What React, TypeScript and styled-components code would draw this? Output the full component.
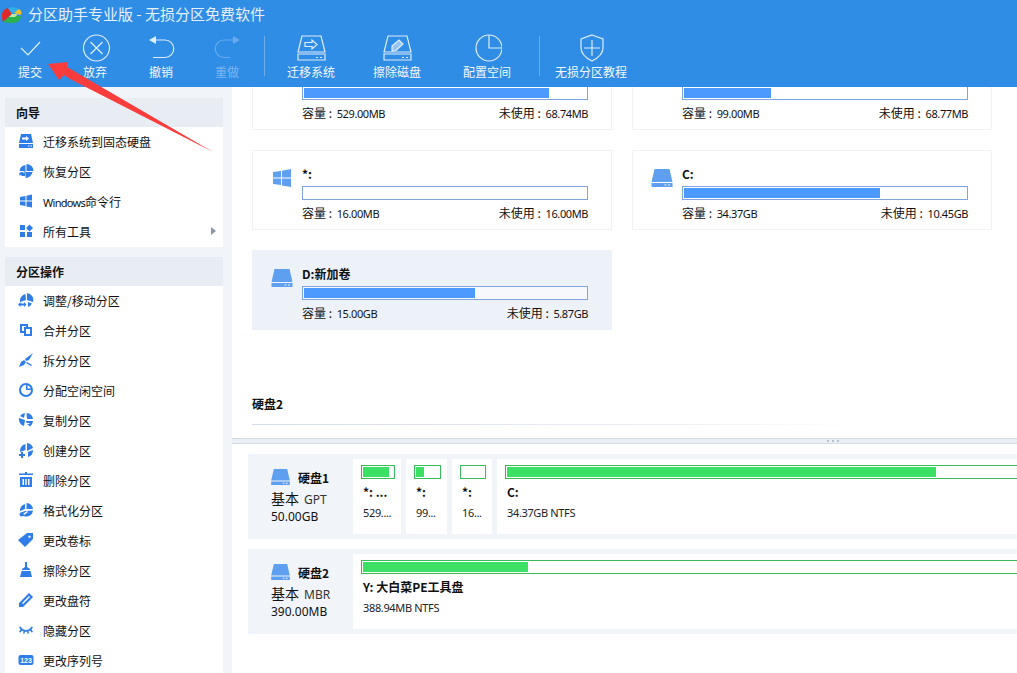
import styled, { createGlobalStyle } from "styled-components";

const Global = createGlobalStyle`
  html, body {
    margin: 0;
    padding: 0;
    height: 100%;
    overflow: hidden;
    background: #fff;
  }
  body {
    font-family: "Noto Sans CJK SC", "Noto Sans", sans-serif;
    font-size: 12px;
    color: #111;
  }
  * { box-sizing: border-box; }
`;

const Page = styled.div`
  position: relative;
  width: 1017px;
  height: 673px;
  overflow: hidden;
  display: flex;
  flex-direction: column;
`;
const Header = styled.header`
  height: 87px;
  flex: none;
  background: #2f8de6;
  color: #fff;
`;
const TitleBar = styled.div`
  height: 27px;
  display: flex;
  align-items: center;
  padding-left: 1px;
  gap: 6px;
  font-size: 15px;
  color: #e6f1fc;
  line-height: 23px;
`;
const Toolbar = styled.div`
  height: 60px;
  display: flex;
`;
const Tool = styled.div<{ $w: number; $off?: boolean }>`
  width: ${(p) => p.$w}px;
  flex: none;
  display: flex;
  flex-direction: column;
  align-items: center;
  font-size: 12px;
  line-height: 16px;
  color: ${(p) => (p.$off ? "#7db6ee" : "#f2f8fe")};
  svg {
    width: 30px;
    height: 30px;
    margin-top: 6px;
    margin-bottom: 1px;
    fill: none;
    stroke: currentColor;
    stroke-width: 1.2;
    opacity: ${(p) => (p.$off ? 0.75 : 0.9)};
  }
`;
const ToolSep = styled.div`
  width: 1px;
  height: 40px;
  margin: 9px 0 0 2px;
  flex: none;
  background: #6cacec;
`;
const Body = styled.div`
  flex: 1;
  min-height: 0;
  display: flex;
`;
const Sidebar = styled.aside`
  width: 232px;
  flex: none;
  background: #f1f5fa;
  padding: 11px 9px 0 5px;
  overflow: hidden;
`;
const SideTitle = styled.div`
  height: 29px;
  background: #e8edf3;
  padding-left: 11px;
  display: flex;
  align-items: center;
  font-size: 12px;
  font-weight: 700;
  color: #111;
`;
const SideList = styled.div`
  background: #fff;
  margin-bottom: 10px;
`;
const SideRow = styled.div`
  position: relative;
  height: 30px;
  display: flex;
  align-items: center;
  padding: 0 0 2px 13px;
  gap: 9px;
  color: #111;
  svg.icon {
    width: 16px;
    height: 16px;
    flex: none;
    fill: #2f7de8;
  }
`;
const Caret = styled.span`
  margin-left: auto;
  margin-right: 7px;
  width: 0;
  height: 0;
  border-left: 5px solid #8a97a8;
  border-top: 4px solid transparent;
  border-bottom: 4px solid transparent;
`;
const Latin = styled.span`
  font-family: "Noto Sans", sans-serif;
  font-size: 11px;
  letter-spacing: -0.4px;
  margin-left: 2px;
`;
const WinLabel = styled.span`
  font-family: "Noto Sans", sans-serif;
  font-size: 11px;
  letter-spacing: -0.7px;
`;
const Main = styled.main`
  flex: 1;
  min-width: 0;
  display: flex;
  flex-direction: column;
`;
const Volumes = styled.section`
  height: 351px;
  flex: none;
  overflow: hidden;
`;
const CardGrid = styled.div`
  margin-top: -37px;
  padding-left: 20px;
  display: grid;
  grid-template-columns: 360px 360px;
  grid-auto-rows: 80px;
  gap: 20px;
`;
const Card = styled.div<{ $active?: boolean }>`
  border: 1px solid ${(p) => (p.$active ? "#edf2f9" : "#f0f2f6")};
  background: ${(p) => (p.$active ? "#edf2f9" : "#fff")};
  display: grid;
  grid-template-columns: 49px 1fr;
  padding-right: 23px;
  svg {
    width: 22px;
    height: 18px;
    margin: 18px 0 0 18px;
    fill: #5f9ff0;
  }
`;
const CardBody = styled.div`
  padding-top: 14px;
`;
const CardName = styled.div`
  height: 18px;
  line-height: 18px;
  font-size: 12px;
  font-weight: 700;
  margin-bottom: 3px;
`;
const Bar = styled.div<{ $active?: boolean }>`
  height: 14px;
  border: 1px solid #7fa6dc;
  padding: 1px;
  background: ${(p) => (p.$active ? "#f6f8fc" : "#fff")};
`;
const Fill = styled.div`
  height: 100%;
  background: #4d9aff;
`;
const Info = styled.div`
  margin-top: 4px;
  height: 18px;
  line-height: 18px;
  display: flex;
  justify-content: space-between;
`;
const DiskHeading = styled.div`
  margin: 65px 0 0 20px;
  height: 30px;
  line-height: 18px;
  font-size: 12px;
  font-weight: 700;
  border-bottom: 1px solid transparent;
  border-image: linear-gradient(90deg, #d5deea 0, #e8edf4 50%, #fff 80%) 1;
`;
const Splitter = styled.div`
  height: 6px;
  flex: none;
  background: #ebf0f7;
  border-top: 1px solid #d3dbe5;
  border-bottom: 1px solid #d3dbe5;
  padding-right: 178px;
  display: flex;
  justify-content: flex-end;
  align-items: center;
  gap: 3px;
  i {
    width: 2px;
    height: 2px;
    background: #b5c1cf;
  }
`;
const DiskMap = styled.section`
  flex: 1;
  min-height: 0;
  padding: 10px 0 0 16px;
  overflow: hidden;
`;
const DiskRow = styled.div`
  height: 85px;
  margin-bottom: 10px;
  background: #f1f5fa;
  display: flex;
  padding: 5px 0;
`;
const DiskInfo = styled.div`
  width: 105px;
  flex: none;
  padding: 7px 0 0 23px;
  svg {
    width: 19px;
    height: 16px;
    fill: #5f9ff0;
  }
`;
const DiskName = styled.div`
  display: flex;
  align-items: center;
  gap: 8px;
  height: 22px;
  font-size: 12px;
  font-weight: 700;
`;
const DiskKind = styled.div`
  height: 20px;
  line-height: 20px;
  font-size: 14px;
  span {
    font-family: "Noto Sans", sans-serif;
    font-size: 12px;
    margin-left: 5px;
    color: #333;
  }
`;
const DiskSize = styled.div`
  height: 18px;
  line-height: 18px;
  font-family: "Noto Sans", sans-serif;
  font-size: 12px;
`;
const Parts = styled.div`
  display: flex;
  gap: 5px;
  flex: 1;
  min-width: 0;
`;
const Part = styled.div<{ $w: number }>`
  width: ${(p) => p.$w}px;
  flex: none;
  background: #fff;
  padding: 6px 6px 0 8px;
  overflow: hidden;
`;
const PartBar = styled.div`
  height: 14px;
  border: 1px solid #38b95a;
  padding: 1px;
  background: #fff;
`;
const PartFill = styled.div`
  height: 100%;
  background: #3be065;
`;
const PartName = styled.div`
  margin-top: 4px;
  padding-left: 2px;
  height: 18px;
  line-height: 18px;
  font-weight: 700;
  white-space: nowrap;
`;
const PartSize = styled.div`
  margin-top: 3px;
  padding-left: 2px;
  height: 18px;
  line-height: 18px;
  font-family: "Noto Sans", sans-serif;
  font-size: 11px;
  letter-spacing: -0.35px;
  color: #222;
  white-space: nowrap;
`;
const Pointer = styled.svg`
  position: absolute;
  left: 0;
  top: 0;
  width: 240px;
  height: 170px;
  pointer-events: none;
`;

const Logo = () => (
  <svg width="21" height="20" viewBox="0 0 21 20">
    <path d="M1 11c0-3 2-6 6-7l4 6-9 8c-1-2-1-5-1-7z" fill="#e02a2a" />
    <path d="M7 4c3-1 8-1 11 1l-5 4-2 1z" fill="#2fb0e8" />
    <path d="M13 9l5-4c2 1 3 4 2 6z" fill="#f3c026" />
    <path d="M9 12h11c0 4-4 7-8 7-4 0-7-.500-10-1z" fill="#29b34a" />
    <path d="M11 10h6l-3 3H8z" fill="#bfe8a0" />
  </svg>
);

const toolIcons: Record<string, React.ReactNode> = {
  check: <path d="M6 15l7 7 12-13" />,
  cancel: (
    <>
      <circle cx="16.500" cy="15" r="13" />
      <path d="M10.500 9l12 12M22.500 9l-12 12" />
    </>
  ),
  undo: (
    <>
      <path d="M10 7h9a8.750 8.750 0 0 1 0 17.500H7" />
      <path d="M3 7l7-4v8z" fill="currentColor" stroke="none" />
    </>
  ),
  redo: (
    <>
      <path d="M21 7h-9a8.750 8.750 0 0 0 0 17.500h6" />
      <path d="M28 7l-7-4v8z" fill="currentColor" stroke="none" />
    </>
  ),
  migrate: (
    <>
      <path d="M6 3h19l4 16H2z" />
      <path d="M2 21h27v6H2z" />
      <path d="M24 24.500h2M20 24.500h2" />
      <path d="M9 9.500h7V7l5 4.500-5 4.500v-2.500H9z" />
    </>
  ),
  wipe: (
    <>
      <path d="M6 3h19l4 16H2z" />
      <path d="M2 21h27v6H2z" />
      <path d="M24 24.500h2M20 24.500h2" />
      <path d="M10 13l7-6 4 4-7 6.500-4 .5z" fill="rgba(255,255,255,.55)" />
    </>
  ),
  pie: (
    <>
      <circle cx="17" cy="15" r="13" />
      <path d="M17 2v13h13" />
    </>
  ),
  shield: (
    <>
      <path d="M16 2l11 4v9c0 6-5 10-11 13-6-3-11-7-11-13V6z" />
      <path d="M16 7v16M8 15h16" />
    </>
  ),
};

const ToolIcon = ({ name }: { name: string }) => <svg viewBox="0 0 30 30">{toolIcons[name]}</svg>;

const DiskGlyph = () => (
  <svg viewBox="0 0 21 18">
    <path d="M3 0h15l3 13H0z" />
    <path fillRule="evenodd" d="M0 14h21v4H0zM13 15.500v1h2v-1zM16.500 15.500v1h2v-1z" />
  </svg>
);

const WinGlyph = () => (
  <svg viewBox="0 0 22 18">
    <path d="M2 3l8-1v6.500H2zM11 1.800L20 0v8.500h-9zM2 9.500h8V16l-8-1zM11 9.500h9V18l-9-1.500z" />
  </svg>
);

const sideIcons: Record<string, React.ReactNode> = {
  migrate: (
    <path
      fillRule="evenodd"
      d="M3 1h10l2 9H1zM1 11h14v4H1zM10 12.500v1h1.500v-1zM12.500 12.500v1H14v-1zM4 4.500v2h4V8l3-2.500L8 3v1.500z"
    />
  ),
  restore: (
    <>
      <path d="M8.500 1a7 7 0 0 1 7 7h-7zM7.500 2v7h7a7 7 0 0 1-7 6V11a3 3 0 0 0-3-3H1.500a7 7 0 0 1 6-6z" />
      <path d="M1 11a3 3 0 0 1 5-1l1-1v4H3l1-1a1.500 1.500 0 0 0-2 1z" />
    </>
  ),
  windows: <path d="M2 4l5.500-1v4.500H2zM8.500 2.800L14 1.500v6H8.500zM2 8.500h5.500V13L2 12zM8.500 8.500H14v6l-5.500-1z" />,
  tools: <path d="M2 2h5v5H2zM2 9h5v5H2zM9 9h5v5H9zM11.500 1.500L15 5l-3.500 3.500L8 5z" />,
  resize: (
    <>
      <path d="M9 1a7 7 0 0 1 6 9L9 8zM7.500 2L8 8l-6 2a7 7 0 0 1 5.500-8zM10 10l4 1.500A7 7 0 0 1 10 15z" />
      <path d="M0 12.500l2.500-2.500v1.500H6V10l2.500 2.500L6 15v-1.500H2.500V15z" />
    </>
  ),
  merge: <path fillRule="evenodd" d="M2 2h8v3h4v9H6v-3H2zM4 4v5h2V5h2V4zM8 7v3h0v2h4V7z" />,
  split: <path d="M15 1l-4 7-3 1-1-2zM1 15l2-5 3-2 2 2-2 3zM9 10l5 3-1 1-5-3z" />,
  allocate: (
    <path
      fillRule="evenodd"
      d="M8 1a7 7 0 1 0 7 7 7 7 0 0 0-7-7zm0 2v5h5a5 5 0 1 1-5-5zM9.500 3.200a5 5 0 0 1 3.300 3.300H9.500z"
    />
  ),
  copy: (
    <>
      <path d="M2 4a7 7 0 0 1 5-3l-1 5zM8.500 1a7 7 0 0 1 6.500 6H9zM1 6l6 2-1 6a7 7 0 0 1-5-8z" />
      <path d="M8 9h7a7 7 0 0 1-3 5.500L9 12h3l-1-1H8.500z" />
    </>
  ),
  create: (
    <>
      <path d="M9 1a7 7 0 0 1 6 5l-6 3zM7.500 2v6L2 10a7 7 0 0 1 5.500-8zM10 10l5-2a7 7 0 0 1-5 7z" />
      <path d="M3 10h2v2h2v2H5v2H3v-2H1v-2h2z" />
    </>
  ),
  trash: <path fillRule="evenodd" d="M7 0h2v1.500h6v1.500H1V1.500h6zM2 5h12v10H2zM4.500 7v6H6V7zM7.300 7v6h1.400V7zM10 7v6h1.500V7z" />,
  format: (
    <>
      <path d="M8.500 1a7 7 0 0 1 6.500 6H8.500zM7 2v5L2 9a7 7 0 0 1 5-7z" />
      <path fillRule="evenodd" d="M15 8.500A7 7 0 0 1 2 11l5-2zM6 13l4-3-1-1-4 3z" />
      <circle cx="3.500" cy="12.500" r="2" />
    </>
  ),
  tag: <path fillRule="evenodd" d="M9 1h6v6l-8 8-7-7zM11.500 3.500a1.200 1.200 0 1 0 .01 0z" />,
  broom: <path d="M7 0h2v5l3 2v1H4V7l3-2zM3.500 9h9L14 15H2z" />,
  pencil: <path fillRule="evenodd" d="M11 1l4 4L5 15H1v-4zM11 4l-7 7 1 1 7-7z" />,
  eye: <path d="M1 5l1.500-.5C4 7 6 8 8 8s4-1 5.500-3.500L15 5l-1.500 2.500L15 10l-1.500.5-1.500-2-1.500 1 .5 2-1.500.3L9 9.700H7l-.5 2.100-1.500-.3.500-2-1.500-1-1.500 2L1 10l1.500-2.500z" />,
};

const SideIcon = ({ name }: { name: string }) =>
  name === "serial" ? (
    <svg className="icon" viewBox="0 0 16 16">
      <rect x="0.500" y="3" width="15" height="10" rx="2" />
      <text x="8" y="11" fontSize="7" fontWeight="700" fontFamily="Liberation Sans" textAnchor="middle" fill="#fff">
        123
      </text>
    </svg>
  ) : (
    <svg className="icon" viewBox="0 0 16 16">
      {sideIcons[name]}
    </svg>
  );

const wizardRows = [
  { icon: "migrate", text: "迁移系统到固态硬盘" },
  { icon: "restore", text: "恢复分区" },
  { icon: "windows", text: "Windows", suffix: "命令行" },
  { icon: "tools", text: "所有工具", more: true },
];
const partitionRows = [
  { icon: "resize", text: "调整/移动分区" },
  { icon: "merge", text: "合并分区" },
  { icon: "split", text: "拆分分区" },
  { icon: "allocate", text: "分配空闲空间" },
  { icon: "copy", text: "复制分区" },
  { icon: "create", text: "创建分区" },
  { icon: "trash", text: "删除分区" },
  { icon: "format", text: "格式化分区" },
  { icon: "tag", text: "更改卷标" },
  { icon: "broom", text: "擦除分区" },
  { icon: "pencil", text: "更改盘符" },
  { icon: "eye", text: "隐藏分区" },
  { icon: "serial", text: "更改序列号" },
];

const cards = [
  { name: "", size: "529.00MB", free: "68.74MB", used: 87, kind: "none" },
  { name: "", size: "99.00MB", free: "68.77MB", used: 31, kind: "none" },
  { name: "*:", size: "16.00MB", free: "16.00MB", used: 0, kind: "win" },
  { name: "C:", size: "34.37GB", free: "10.45GB", used: 69.5, kind: "disk" },
  { name: "D:新加卷", size: "15.00GB", free: "5.87GB", used: 60.5, kind: "disk", active: true },
];

function App() {
  return (
    <Page>
      <Global />
      <Header>
        <TitleBar>
          <Logo />
          分区助手专业版 - 无损分区免费软件
        </TitleBar>
        <Toolbar>
          <Tool $w={60}>
            <ToolIcon name="check" />
            提交
          </Tool>
          <Tool $w={70}>
            <ToolIcon name="cancel" />
            放弃
          </Tool>
          <Tool $w={62}>
            <ToolIcon name="undo" />
            撤销
          </Tool>
          <Tool $w={70} $off>
            <ToolIcon name="redo" />
            重做
          </Tool>
          <ToolSep />
          <Tool $w={92}>
            <ToolIcon name="migrate" />
            迁移系统
          </Tool>
          <Tool $w={80}>
            <ToolIcon name="wipe" />
            擦除磁盘
          </Tool>
          <Tool $w={100}>
            <ToolIcon name="pie" />
            配置空间
          </Tool>
          <ToolSep />
          <Tool $w={102}>
            <ToolIcon name="shield" />
            无损分区教程
          </Tool>
        </Toolbar>
      </Header>
      <Body>
        <Sidebar>
          <SideTitle>向导</SideTitle>
          <SideList>
            {wizardRows.map((row) => (
              <SideRow key={row.icon}>
                <SideIcon name={row.icon} />
                <span>
                  {row.suffix ? <WinLabel>{row.text}</WinLabel> : row.text}
                  {row.suffix}
                </span>
                {row.more && <Caret />}
              </SideRow>
            ))}
          </SideList>
          <SideTitle>分区操作</SideTitle>
          <SideList>
            {partitionRows.map((row) => (
              <SideRow key={row.icon}>
                <SideIcon name={row.icon} />
                <span>{row.text}</span>
              </SideRow>
            ))}
          </SideList>
        </Sidebar>
        <Main>
          <Volumes>
            <CardGrid>
              {cards.map((c) => (
                <Card key={c.size + c.free} $active={c.active}>
                  <div>{c.kind === "win" ? <WinGlyph /> : c.kind === "disk" ? <DiskGlyph /> : null}</div>
                  <CardBody>
                    <CardName>{c.name}</CardName>
                    <Bar $active={c.active}>
                      <Fill style={{ width: `${c.used}%` }} />
                    </Bar>
                    <Info>
                      <span>
                        容量 : <Latin>{c.size}</Latin>
                      </span>
                      <span>
                        未使用 : <Latin>{c.free}</Latin>
                      </span>
                    </Info>
                  </CardBody>
                </Card>
              ))}
            </CardGrid>
            <DiskHeading>硬盘2</DiskHeading>
          </Volumes>
          <Splitter>
            <i />
            <i />
            <i />
          </Splitter>
          <DiskMap>
            <DiskRow>
              <DiskInfo>
                <DiskName>
                  <DiskGlyph />
                  硬盘1
                </DiskName>
                <DiskKind>
                  基本<span>GPT</span>
                </DiskKind>
                <DiskSize>50.00GB</DiskSize>
              </DiskInfo>
              <Parts>
                <Part $w={48}>
                  <PartBar>
                    <PartFill style={{ width: "87%" }} />
                  </PartBar>
                  <PartName>*: ...</PartName>
                  <PartSize>529....</PartSize>
                </Part>
                <Part $w={41}>
                  <PartBar>
                    <PartFill style={{ width: "36%" }} />
                  </PartBar>
                  <PartName>*:</PartName>
                  <PartSize>99...</PartSize>
                </Part>
                <Part $w={40}>
                  <PartBar />
                  <PartName>*:</PartName>
                  <PartSize>16...</PartSize>
                </Part>
                <Part $w={620}>
                  <PartBar>
                    <PartFill style={{ width: "71.300%" }} />
                  </PartBar>
                  <PartName>C:</PartName>
                  <PartSize>34.37GB NTFS</PartSize>
                </Part>
              </Parts>
            </DiskRow>
            <DiskRow>
              <DiskInfo>
                <DiskName>
                  <DiskGlyph />
                  硬盘2
                </DiskName>
                <DiskKind>
                  基本<span>MBR</span>
                </DiskKind>
                <DiskSize>390.00MB</DiskSize>
              </DiskInfo>
              <Parts>
                <Part $w={700}>
                  <PartBar>
                    <PartFill style={{ width: "24.200%" }} />
                  </PartBar>
                  <PartName>Y: 大白菜PE工具盘</PartName>
                  <PartSize>388.94MB NTFS</PartSize>
                </Part>
              </Parts>
            </DiskRow>
          </DiskMap>
        </Main>
      </Body>
      <Pointer viewBox="0 0 240 170">
        <path d="M48 64L68 62 67 67 213 152 70 79 64 75 59 80z" fill="#fb3c3c" />
      </Pointer>
    </Page>
  );
}

export default App;
